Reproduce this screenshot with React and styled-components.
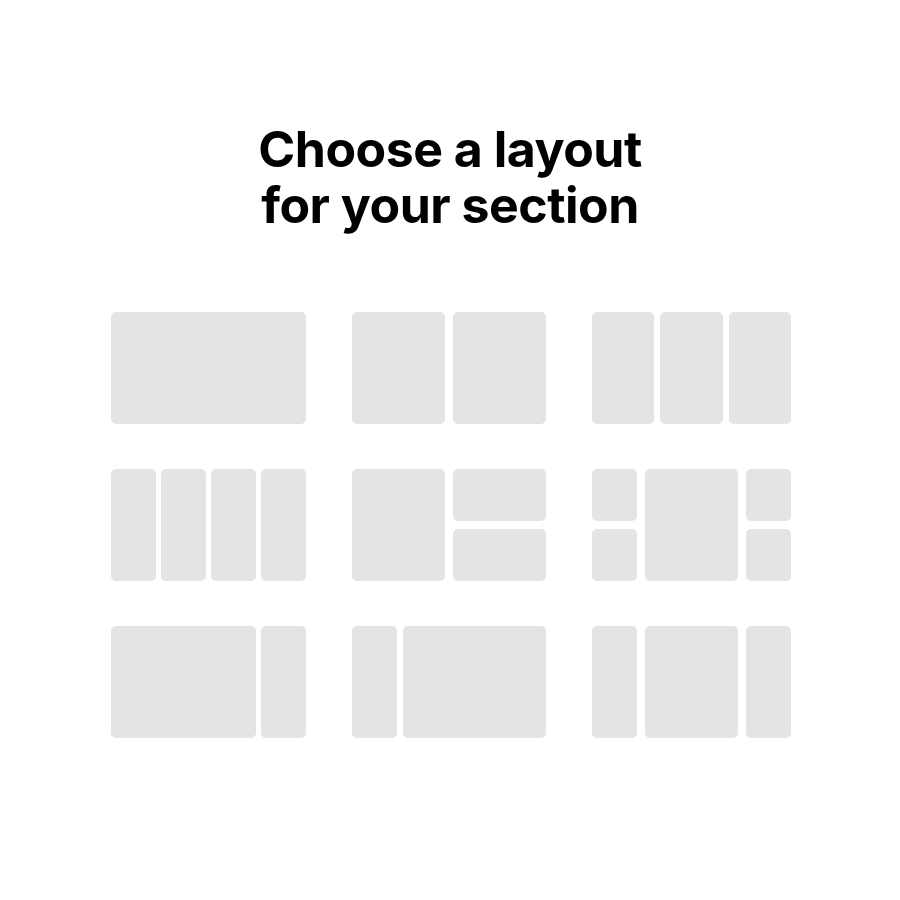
import React from 'react';
import styled, { createGlobalStyle } from 'styled-components';

const Global = createGlobalStyle`
  html, body { margin: 0; padding: 0; background: #fff; }
  body { font-family: Inter, "Noto Sans", sans-serif; }
`;

const Page = styled.div`
  width: 900px;
  height: 900px;
  display: flex;
  flex-direction: column;
  align-items: center;
`;

const Title = styled.h1`
  margin: 121px 0 0;
  font-size: 50px;
  line-height: 56px;
  font-weight: 650;
  letter-spacing: -0.5px;
  color: #000;
  text-align: center;
`;

const Grid = styled.div`
  margin-top: 79px;
  display: grid;
  grid-template-columns: 195px 194px 199px;
  grid-auto-rows: 112px;
  column-gap: 46px;
  row-gap: 45px;
  align-self: flex-start;
  margin-left: 111px;
`;

const Layout = styled.div`
  display: grid;
  grid-template-columns: ${p => p.cols};
  gap: ${p => p.gap}px;
  height: 112px;
`;

const Stack = styled.div`
  display: grid;
  grid-template-rows: 1fr 1fr;
  gap: 8px;
`;

const Block = styled.div`
  background: #e4e4e4;
  border-radius: 5px;
`;

export default function App() {
  return (
    <Page>
      <Global />
      <Title>Choose a layout<br />for your section</Title>
      <Grid>
        <Layout cols="1fr" gap={0}>
          <Block />
        </Layout>
        <Layout cols="1fr 1fr" gap={8}>
          <Block /><Block />
        </Layout>
        <Layout cols="1fr 1fr 1fr" gap={6}>
          <Block /><Block /><Block />
        </Layout>

        <Layout cols="1fr 1fr 1fr 1fr" gap={5}>
          <Block /><Block /><Block /><Block />
        </Layout>
        <Layout cols="1fr 1fr" gap={8}>
          <Block />
          <Stack><Block /><Block /></Stack>
        </Layout>
        <Layout cols="45px 1fr 45px" gap={8}>
          <Stack><Block /><Block /></Stack>
          <Block />
          <Stack><Block /><Block /></Stack>
        </Layout>

        <Layout cols="145px 1fr" gap={5}>
          <Block /><Block />
        </Layout>
        <Layout cols="45px 1fr" gap={6}>
          <Block /><Block />
        </Layout>
        <Layout cols="45px 1fr 45px" gap={8}>
          <Block /><Block /><Block />
        </Layout>
      </Grid>
    </Page>
  );
}
